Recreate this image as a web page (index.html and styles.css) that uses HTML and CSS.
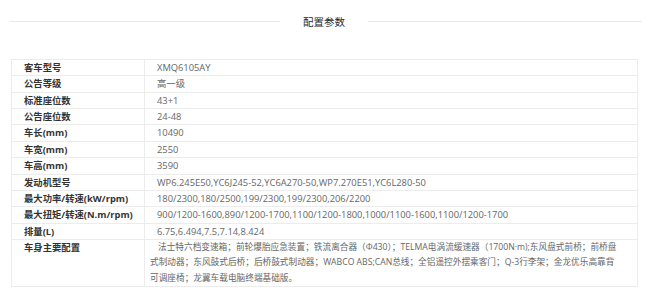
FILE: index.html
```html
<!DOCTYPE html>
<html lang="zh">
<head>
<meta charset="utf-8">
<link rel="stylesheet" href="styles.css">
</head>
<body>
<div class="page">
  <div class="heading">
    <span class="rule"></span>
    <h2 class="title">配置参数</h2>
    <span class="rule rule-right"></span>
  </div>
  <table class="spec">
    <tr><th>客车型号</th><td>XMQ6105AY</td></tr>
    <tr><th>公告等级</th><td>高一级</td></tr>
    <tr><th>标准座位数</th><td>43+1</td></tr>
    <tr><th>公告座位数</th><td>24-48</td></tr>
    <tr><th>车长(mm)</th><td>10490</td></tr>
    <tr><th>车宽(mm)</th><td>2550</td></tr>
    <tr><th>车高(mm)</th><td>3590</td></tr>
    <tr><th>发动机型号</th><td>WP6.245E50,YC6J245-52,YC6A270-50,WP7.270E51,YC6L280-50</td></tr>
    <tr><th>最大功率/转速(kW/rpm)</th><td>180/2300,180/2500,199/2300,199/2300,206/2200</td></tr>
    <tr><th>最大扭矩/转速(N.m/rpm)</th><td>900/1200-1600,890/1200-1700,1100/1200-1800,1000/1100-1600,1100/1200-1700</td></tr>
    <tr><th>排量(L)</th><td>6.75,6.494,7.5,7.14,8.424</td></tr>
    <tr><th>车身主要配置</th><td class="long">法士特六档变速箱；前轮爆胎应急装置；铁流离合器（Φ430）；TELMA电涡流缓速器（1700N·m);东风盘式前桥；前桥盘<br>式制动器；东风鼓式后桥；后桥鼓式制动器；WABCO ABS;CAN总线；全铝遥控外摆乘客门；Q-3行李架；金龙优乐高靠背<br>可调座椅；龙翼车载电脑终端基础版。</td></tr>
  </table>
</div>
</body>
</html>
```
FILE: styles.css
```css
html, body {
  margin: 0;
  padding: 0;
  background: #fff;
}
body {
  font-family: "Open Sans", "Noto Sans CJK SC", sans-serif;
  font-size: 9.33px;
  color: #555;
}
.page {
  padding: 0 8px 0 10px;
}
.heading {
  display: flex;
  align-items: center;
  height: 43px;
}
.rule {
  flex: none;
  width: 270px;
  height: 1px;
  background: #e8e8e8;
}
.rule-right {
  flex: 1 1 auto;
  width: auto;
}
.title {
  flex: none;
  margin: 0;
  padding: 0 23px;
  font-size: 10.5px;
  line-height: 14px;
  font-weight: normal;
  color: #2a2a2a;
  font-family: "Noto Sans CJK SC", sans-serif;
}
.spec {
  margin: 16px 0 0 1px;
  width: 627px;
  border-collapse: collapse;
  border: 1px solid #ececec;
}
.spec th, .spec td {
  border: 1px solid #ececec;
  line-height: 15.36px;
  padding: 0;
  vertical-align: top;
  text-align: left;
}
.spec th {
  width: 120px;
  padding-left: 12px;
  font-weight: bold;
  color: #333;
}
.spec td {
  padding-left: 12px;
  color: #666;
}
.spec td.long {
  padding: 0 3px 0 5px;
  text-indent: 8px;
  font-size: 8.67px;
  white-space: nowrap;
}
```
